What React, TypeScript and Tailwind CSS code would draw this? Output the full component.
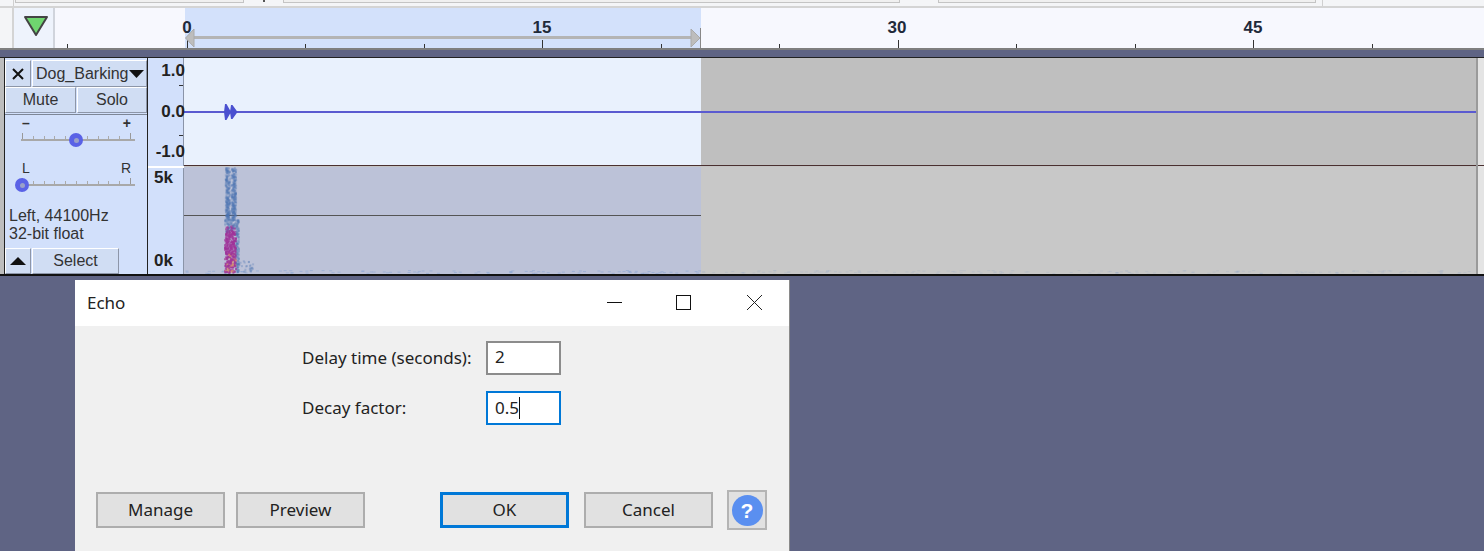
const sans = "font-['Liberation_Sans',Arial,sans-serif]";
const ui = "font-['Noto_Sans','Open_Sans',sans-serif]";

const ticks = [67, 187, 305, 424, 542, 661, 779, 898, 1016, 1135, 1253, 1372];
const labels = [
  { x: 187, t: "0" },
  { x: 542, t: "15" },
  { x: 897, t: "30" },
  { x: 1253, t: "45" },
];

// cheap repeatable noise for the spectrogram dots
function noise(i: number) {
  const v = Math.sin(i * 12.9898) * 43758.5453;
  return v - Math.floor(v);
}

function Spectrogram() {
  const dots = [];
  for (let i = 0; i < 1100; i++) {
    const y = noise(i) * 105;
    const wide = y > 52;
    const side = noise(i + 900) > 0.5 ? 1 : -1;
    const x = wide
      ? 40 + noise(i + 500) * 14
      : 46 + side * 3 + (noise(i + 500) - 0.5) * 4.5;
    const hot = y > 56 + noise(i + 11) * 10 && x > 40 && x < 51;
    let fill = "#4f78b4";
    if (hot) fill = y > 84 && noise(i + 40) > 0.8 ? "#d89a70" : "#a0359a";
    dots.push(<rect key={i} x={x} y={y} width="2" height="2" fill={fill} opacity={hot ? 0.7 : 0.28} />);
  }
  const low = [];
  for (let i = 0; i < 260; i++) {
    const x = noise(i + 70) * 1290;
    low.push(
      <rect
        key={i}
        x={x}
        y={103 + noise(i + 20) * 3}
        width="3"
        height="1"
        fill="#5f8fd0"
        opacity={x < 517 ? 0.3 : 0.12}
      />
    );
  }
  const tail = [];
  for (let i = 0; i < 30; i++) {
    tail.push(
      <rect key={i} x={51 + noise(i + 130) * 18} y={93 + noise(i + 170) * 11} width="2" height="2" fill="#4f78b4" opacity="0.3" />
    );
  }
  return (
    <svg className="absolute left-0 top-0" width="1292" height="107">
      {low}
      {tail}
      {dots}
    </svg>
  );
}

function Slider({ knob, minus, plus }: { knob: number; minus: string; plus: string }) {
  const letters = minus === "L";
  return (
    <div className="relative h-[33px] w-[114px] ml-[16px] text-[#333]">
      <div className={`flex justify-between pl-[1px] pr-[4px] text-[14px] leading-[14px] h-[14px] ${letters ? "" : "font-bold"}`}>
        <span>{minus}</span>
        <span>{plus}</span>
      </div>
      <div className="flex justify-between items-end h-[8px] mt-[1px] pl-[1px] pr-[4px]">
        {Array.from({ length: 11 }).map((_, i) => (
          <span key={i} className={i === 0 || i === 10 ? "w-px h-[6px] bg-[#999]" : "w-px h-[3px] bg-[#aaa]"} />
        ))}
      </div>
      <div className="h-[2px] bg-[#a8a8a8]" />
      <span
        className="absolute top-[17px] size-[14px] rounded-full bg-[#5a62e6] flex items-center justify-center"
        style={{ left: knob }}
      >
        <span className="size-[5px] rounded-full bg-[#9aa0c8]" />
      </span>
    </div>
  );
}

function PanelButton({ className, children }: { className: string; children: React.ReactNode }) {
  return (
    <div
      className={`flex items-center justify-center bg-[#d0ddf3] border-t border-l border-t-white border-l-white border-b border-r border-b-[#8d96a8] border-r-[#8d96a8] text-[#333] ${className}`}
    >
      {children}
    </div>
  );
}

function DialogButton({ label, primary }: { label: string; primary?: boolean }) {
  return (
    <button
      className={`w-[129px] h-[36px] bg-[#e1e1e1] text-[#222] text-[17px] ${
        primary ? "border-[3px] border-[#0078d7] mx-0" : "border-2 border-[#adadad]"
      }`}
    >
      {label}
    </button>
  );
}

export default function App() {
  return (
    <div className={`w-[1484px] h-[551px] overflow-hidden bg-[#5f6484] ${sans}`}>
      {/* clipped toolbar strip */}
      <div className="h-[8px] bg-[#f4f5f7] flex border-b-2 border-[#d4d4d4] relative">
        <div className="w-px bg-[#d0d0d0] ml-[13px]" />
        <div className="ml-px w-[229px] h-[3px] bg-[#f0f0f0] border border-t-0 border-[#c4c4c4]" />
        <div className="ml-[19px] w-[2px] h-[2px] bg-[#555]" />
        <div className="ml-[18px] w-[617px] h-[3px] bg-[#f0f0f0] border border-t-0 border-[#c4c4c4]" />
        <div className="ml-[38px] w-[378px] h-[3px] bg-[#f0f0f0] border border-t-0 border-[#c4c4c4]" />
        <div className="ml-[6px] w-px bg-[#d0d0d0]" />
      </div>

      {/* ruler */}
      <div className="relative h-[42px] bg-[#f7f8fe] border-b-2 border-[#7f7f7f] flex">
        <div className="w-[14px] bg-[#f4f5f7] border-r-2 border-[#d4d4d4]" />
        <div className="w-[41px] h-[40px] bg-[#eef3fc] border-r-2 border-[#d0d4dc] flex items-center justify-center pb-[4px] pl-[5px]">
          <svg width="26" height="22" viewBox="0 0 26 22">
            <path d="M2 2 L24 2 L13 20 Z" fill="#6fd66f" stroke="#444" strokeWidth="2" strokeLinejoin="round" />
          </svg>
        </div>
        <div className="ml-[130px] w-[516px] h-[40px] bg-[#d3e1fb]" />
        {ticks.map((x, i) => (
          <span
            key={x}
            className={`absolute bottom-0 w-px ${i % 3 === 1 ? "h-[8px]" : "h-[4px]"} bg-[#333]`}
            style={{ left: x }}
          />
        ))}
        {labels.map((l) => (
          <span
            key={l.t}
            className="absolute top-[10px] -translate-x-1/2 text-[17px] leading-[20px] font-bold text-[#1f2a3a]"
            style={{ left: l.x }}
          >
            {l.t}
          </span>
        ))}
        {/* selection bracket */}
        <svg className="absolute left-[184px] top-[20px]" width="520" height="20">
          <rect x="8" y="8" width="500" height="3" fill="#b4b4b4" />
          <path d="M1.5 10 L10 1 L10 19 Z" fill="#bdbdbd" stroke="#aaa" />
          <path d="M516 10 L507 1 L507 19 Z" fill="#bdbdbd" stroke="#aaa" />
          <rect x="516" y="0" width="1" height="20" fill="#888" />
        </svg>
      </div>

      <div className="h-[8px] bg-[#5f6484] border-b border-[#222]" />

      {/* track */}
      <div className="relative h-[218px] flex bg-[#bdbdbd] border-b-2 border-[#111] pl-[4px]">
        <div className="w-[144px] bg-[#d2e0fb] border-l border-r border-[#222] flex flex-col shrink-0 text-[16px]">
          <div className="flex h-[29px] pt-[2px]">
            <PanelButton className="w-[26px] text-[#111]">
              <svg width="12" height="12" viewBox="0 0 12 12">
                <path d="M1 1 L11 11 M11 1 L1 11" stroke="#111" strokeWidth="2" />
              </svg>
            </PanelButton>
            <PanelButton className="flex-1 ml-px pl-[3px] justify-start">
              <span className="text-[16px] whitespace-nowrap text-[#333]">Dog_Barking</span>
              <svg className="shrink-0" width="15" height="8" viewBox="0 0 15 8">
                <path d="M0 0 L15 0 L7.5 8 Z" fill="#111" />
              </svg>
            </PanelButton>
          </div>
          <div className="flex h-[26px]">
            <PanelButton className="w-[71px]">Mute</PanelButton>
            <PanelButton className="flex-1 ml-px">Solo</PanelButton>
          </div>
          <div className="mt-[1px] border-t border-[#7d8696]" />
          <div className="pt-[1px]">
            <Slider knob={48} minus="–" plus="+" />
          </div>
          <div className="mt-[12px]">
            <Slider knob={-6} minus="L" plus="R" />
          </div>
          <div className="mt-[13px] ml-[4px] text-[16px] leading-[18px] text-[#333]">
            <div>Left, 44100Hz</div>
            <div>32-bit float</div>
          </div>
          <div className="flex h-[26px] mt-auto">
            <PanelButton className="w-[26px]">
              <svg width="16" height="8" viewBox="0 0 16 8">
                <path d="M0 8 L16 8 L8 0 Z" fill="#111" />
              </svg>
            </PanelButton>
            <PanelButton className="w-[87px] ml-px">Select</PanelButton>
          </div>
        </div>

        <div className="w-[36px] shrink-0 flex flex-col text-[17px] font-bold text-[#222] text-right bg-[#d2e0fb]">
          <div className="relative h-[108px] border-r border-[#8a94a8]">
            <span className="absolute right-[-2px] top-[4px] leading-[18px] z-10">1.0</span>
            <span className="absolute right-0 top-[27px] w-[4px] h-px bg-[#333]" />
            <span className="absolute right-[-2px] top-[45px] leading-[18px] z-10">0.0</span>
            <span className="absolute right-0 top-[77px] w-[4px] h-px bg-[#333]" />
            <span className="absolute right-[-2px] top-[85px] leading-[18px] z-10">-1.0</span>
          </div>
          <div className="h-[2px] bg-white" />
          <div className="relative flex-1 border-r border-[#8a94a8]">
            <span className="absolute left-[6px] top-[1px] leading-[18px]">5k</span>
            <span className="absolute left-[6px] bottom-[4px] leading-[18px]">0k</span>
          </div>
        </div>

        <div className="flex-1 flex flex-col">
          {/* waveform */}
          <div className="relative h-[108px] flex border-b border-[#4a3030]">
            <div className="w-[517px] bg-[#e9f1fd]" />
            <div className="flex-1 bg-[#bfbfbf]" />
            <div className="absolute left-0 right-0 top-[53px] h-[2px] bg-[#5a5ad0]" />
            <svg className="absolute left-[39px] top-[45px]" width="16" height="18" viewBox="0 0 16 18">
              <path d="M2 1 L3.5 1 L8 9 L3.5 17 L2 17 L1 9 Z M8 2 L9.5 2 L14.5 9 L9.5 16 L8 16 L7 9 Z" fill="#4a50d0" />
            </svg>
          </div>
          <div className="h-px bg-[#c4c4c4]" />
          {/* spectrogram */}
          <div className="relative flex-1 flex">
            <div className="w-[517px] bg-[#bcc2d8] relative">
              <div className="absolute left-0 right-0 top-[48px] h-px bg-[#555]" />
              <Spectrogram />
            </div>
            <div className="flex-1 bg-[#c8c8c8]" />
          </div>
        </div>
        <div className="w-[8px] shrink-0 flex flex-col bg-[#e4e4e4] border-l-2 border-[#9a9a9a]">
          <div className="h-[108px] border-b border-[#4a3030]" />
        </div>
      </div>

      <div className="h-[4px]" />

      {/* Echo dialog */}
      <div className={`ml-[75px] w-[715px] h-[272px] flex flex-col bg-[#f0f0f0] border-r border-[#8a8a8a] ${ui}`}>
        <div className="h-[46px] shrink-0 bg-white flex items-center">
          <span className="ml-[12px] text-[17px] text-[#222]">Echo</span>
          <svg className="ml-auto mr-[26px]" width="156" height="16" viewBox="0 0 156 16">
            <path d="M0 7.5 H15" stroke="#111" fill="none" />
            <rect x="69.5" y="0.5" width="14" height="14" stroke="#111" fill="none" />
            <path d="M140 0 L155 15 M155 0 L140 15" stroke="#222" fill="none" />
          </svg>
        </div>

        <div className="mt-[15px] flex items-center h-[34px]">
          <span className="ml-[227px] w-[184px] text-[17px] text-[#222]">Delay time (seconds):</span>
          <div className="w-[75px] h-[34px] bg-white border-2 border-[#8c8c8c] pl-[7px] text-[17px] leading-[28px] text-[#222]">2</div>
        </div>
        <div className="mt-[16px] flex items-center h-[34px]">
          <span className="ml-[227px] w-[184px] text-[17px] text-[#222]">Decay factor:</span>
          <div className="w-[75px] h-[34px] bg-white border-2 border-[#0078d7] pl-[7px] text-[17px] leading-[28px] text-[#222] flex items-center">
            0.5<span className="w-px h-[22px] bg-[#111]" />
          </div>
        </div>

        <div className="mt-[65px] ml-[21px] flex items-center">
          <DialogButton label="Manage" />
          <div className="w-[11px]" />
          <DialogButton label="Preview" />
          <div className="w-[75px]" />
          <DialogButton label="OK" primary />
          <div className="w-[15px]" />
          <DialogButton label="Cancel" />
          <div className="w-[14px]" />
          <div className="size-[40px] bg-[#e1e1e1] border-2 border-[#b4b4b4] flex items-center justify-center">
            <span className={`size-[31px] rounded-full bg-[#5a8ff0] text-white font-bold text-[21px] leading-[31px] text-center ${sans}`}>?</span>
          </div>
        </div>
      </div>
    </div>
  );
}
